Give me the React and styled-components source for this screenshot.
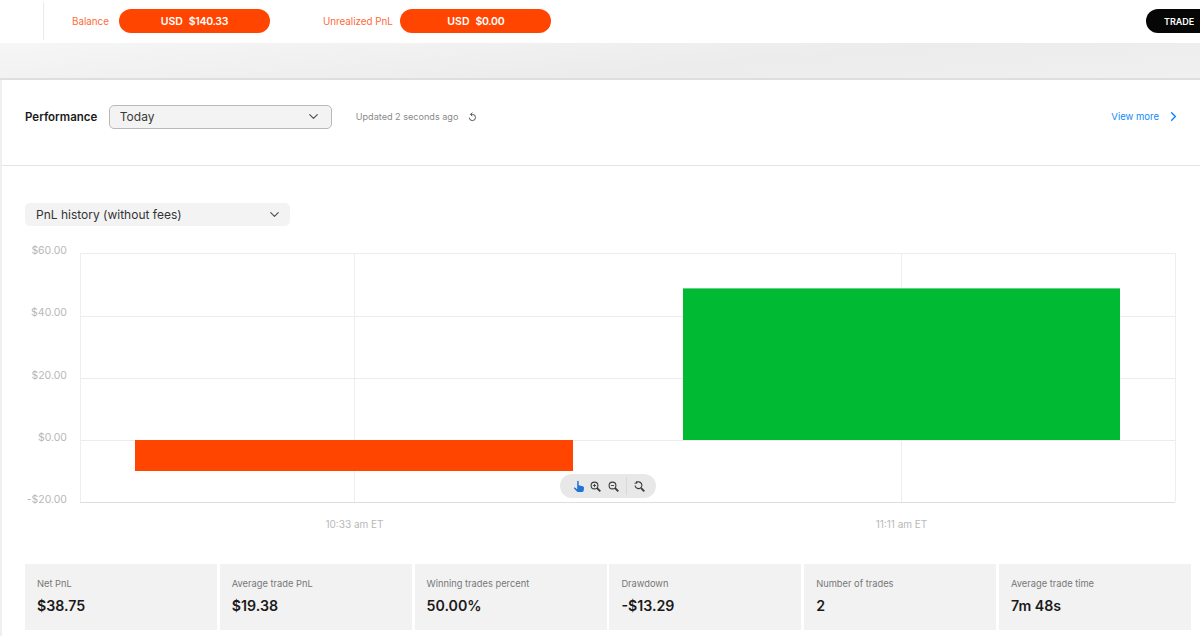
import React from 'react';
import styled, { createGlobalStyle } from 'styled-components';
import { ChevronDown, ChevronRight } from 'lucide-react';

const GlobalStyle = createGlobalStyle`
   html, body {
     margin: 0;
     padding: 0;
     background: #fff;
     overflow: hidden;
   }
   body {
     font-family: Inter, "Liberation Sans", sans-serif;
   }
`;

const Page = styled.div`
   width: 1200px;
   height: 636px;
   overflow: hidden;
   display: flex;
   flex-direction: column;
`;

const TopBar = styled.header`
   height: 43px;
   flex: none;
   display: flex;
   align-items: center;
   padding: 0 0 1px 43px;
   box-sizing: border-box;
`;

const Divider = styled.div`
   width: 1px;
   height: 38px;
   background: #eaeaea;
   margin-right: 28px;
`;

const BalanceGroup = styled.div`
   display: flex;
   align-items: center;
   gap: ${({ $gap }) => $gap}px;
   margin-right: ${({ $after }) => $after || 0}px;
`;

const BalanceLabel = styled.span`
   font-size: 9.8px;
   color: #ff6a38;
`;

const Pill = styled.div`
   width: 151px;
   height: 24px;
   border-radius: 12px;
   background: #ff4500;
   color: #fff;
   font-size: 10.5px;
   font-weight: 600;
   display: flex;
   align-items: center;
   justify-content: center;
   gap: 6px;
`;

const Amount = styled.span`
   letter-spacing: -0.3px;
`;

const TradeButton = styled.button`
   margin-left: auto;
   width: 54px;
   height: 24px;
   border: 0;
   border-radius: 12px 0 0 12px;
   background: #060606;
   color: #fff;
   font-family: inherit;
   font-size: 9px;
   font-weight: 600;
   text-align: left;
   padding: 0 0 0 18px;
`;

const Band = styled.div`
   height: 37px;
   box-sizing: border-box;
   flex: none;
   background: linear-gradient(175deg, #f6f6f6, #ececec 60%, #f0f0f0);
   border-bottom: 2px solid #dedede;
`;

const Content = styled.main`
   flex: 1;
   border-left: 2px solid #efefef;
   min-height: 0;
`;

const PerformanceRow = styled.section`
   height: 86px;
   box-sizing: border-box;
   border-bottom: 1px solid #e4e4e4;
   display: flex;
   align-items: center;
   padding: 1px 19px 13px 23px;
`;

const Title = styled.h2`
   margin: 0 12px 0 0;
   font-size: 11.5px;
   font-weight: 600;
   color: #1a1a1a;
`;

const RangeSelect = styled.div`
   width: 223px;
   height: 24px;
   box-sizing: border-box;
   border: 1px solid #b9b9b9;
   border-radius: 5px;
   background: #f3f3f3;
   display: flex;
   align-items: center;
   justify-content: space-between;
   padding: 0 10px 0 9.5px;
   font-size: 12px;
   color: #3a3a3a;
`;

const Updated = styled.span`
   margin-left: 23.5px;
   font-size: 9.1px;
   color: #8a8a8a;
   display: flex;
   align-items: center;
   gap: 10px;
`;

const ViewMore = styled.a`
   margin-left: auto;
   display: flex;
   align-items: center;
   gap: 7px;
   color: #1188ff;
   font-size: 9.5px;
`;

const MetricSelect = styled.div`
   width: 265px;
   height: 23px;
   margin: 37px 0 0 23px;
   box-sizing: border-box;
   border-radius: 5px;
   background: #f3f3f3;
   display: flex;
   align-items: center;
   justify-content: space-between;
   padding: 0 8px 1px 11px;
   font-size: 12px;
   color: #333;
`;

const ChartWrap = styled.div`
   position: relative;
   height: 338px;
`;

const ChartSvg = styled.svg`
   display: block;
`;

const AxisLabel = styled.text`
   font-family: Inter, "Liberation Sans", sans-serif;
   font-size: ${({ $size }) => $size}px;
   fill: #b8b8b8;
`;

const ZoomBar = styled.div`
   position: absolute;
   left: 558px;
   top: 248px;
   width: 96px;
   height: 24px;
   border-radius: 12px;
   background: #e8e8e8;
   display: flex;
   align-items: center;
   padding-left: 13px;
   box-sizing: border-box;
`;

const ZoomButton = styled.span`
   width: ${({ $w }) => $w}px;
   display: flex;
   align-items: center;
`;

const ZoomSep = styled.span`
   width: 1px;
   height: 18px;
   background: #d8d8d8;
   margin-right: 6.5px;
`;

const Stats = styled.section`
   display: grid;
   grid-template-columns: repeat(6, 192px);
   gap: 2.8px;
   padding-left: 23px;
`;

const StatCard = styled.div`
   height: 66px;
   background: #f2f2f2;
   padding: 13px 12px 0;
   box-sizing: border-box;
`;

const StatLabel = styled.div`
   font-size: 9.3px;
   color: #777;
   line-height: 13px;
`;

const StatValue = styled.div`
   margin-top: 7px;
   font-size: 14.2px;
   font-weight: 600;
   color: #1a1a1a;
   line-height: 18px;
`;

const stats = [
   { label: 'Net PnL', value: '$38.75' },
   { label: 'Average trade PnL', value: '$19.38' },
   { label: 'Winning trades percent', value: '50.00%' },
   { label: 'Drawdown', value: '-$13.29' },
   { label: 'Number of trades', value: '2' },
   { label: 'Average trade time', value: '7m 48s' },
];

const yTicks = [
   { label: '$60.00', y: 253, textY: 254 },
   { label: '$40.00', y: 316, textY: 316 },
   { label: '$20.00', y: 378, textY: 379 },
   { label: '$0.00', y: 440, textY: 441 },
   { label: '-$20.00', y: 502, textY: 503 },
];

// chart svg sits at x=2, y=226 on the page, keep page coords inside
const PnlChart = () => (
   <ChartSvg width="1198" height="338" viewBox="2 226 1198 338">
      {yTicks.map(({ label, y, textY }) => (
         <g key={label}>
            <line x1="80" x2="1175" y1={y + 0.5} y2={y + 0.5} stroke="#ececec" />
            <AxisLabel $size={10.5} x="67" y={textY} textAnchor="end">{label}</AxisLabel>
         </g>
      ))}
      {[80, 354, 901, 1175].map(x => (
         <line key={x} x1={x + 0.5} x2={x + 0.5} y1="253" y2="502" stroke="#eeeeee" />
      ))}
      <line x1="80" x2="1175" y1="502.5" y2="502.5" stroke="#dedede" />
      <rect x="135" y="440" width="438" height="31" fill="#ff4500" />
      <rect x="683" y="288.4" width="437" height="151.6" fill="#01ba34" />
      <AxisLabel $size={10} x="354.5" y="528" textAnchor="middle">10:33 am ET</AxisLabel>
      <AxisLabel $size={10} x="901.5" y="528" textAnchor="middle">11:11 am ET</AxisLabel>
   </ChartSvg>
);

const HandIcon = () => (
   <svg width="12" height="13" viewBox="0 0 12 13">
      <path d="M4.2 1.2c0-.7 1.5-.7 1.5 0v4l4 1c1 .3 1.4 1 1.3 2l-.4 2.6c-.1.7-.6 1.2-1.3 1.2H5.2c-.5 0-.9-.2-1.2-.6L1 8.6c-.4-.7.5-1.3 1.1-.8l2.1 1.4z" fill="#1f74d6" />
   </svg>
);

// kind: in / out / reset
const GlassIcon = ({ kind }) => (
   <svg width="11" height="11" viewBox="0 0 11 11" fill="none" stroke="#3c3c3c">
      {kind === 'reset' ? (
         <>
            <path d="M2 1.9A3.4 3.4 0 1 1 1.1 4.5" strokeWidth="1.1" />
            <path d="M.6 2.2h2.2V0" strokeWidth="1" />
         </>
      ) : (
         <circle cx="4.5" cy="4.5" r="3.4" strokeWidth="1.1" />
      )}
      <path d="M7 7l3.3 3.3" strokeWidth="1.8" />
      {kind !== 'reset' && <path d="M2.9 4.5h3.2" strokeWidth="0.9" />}
      {kind === 'in' && <path d="M4.5 2.9v3.2" strokeWidth="0.9" />}
   </svg>
);

const RefreshIcon = () => (
   <svg width="9" height="10" viewBox="0 0 9 10" fill="none" stroke="#555" strokeWidth="1">
      <path d="M2.6 2.4h2A3.1 3.1 0 1 1 1.3 5.6" />
      <path d="M4.3.6 2.5 2.4l1.8 1.8" />
   </svg>
);

const App = () => (
   <Page>
      <GlobalStyle />
      <TopBar>
         <Divider />
         <BalanceGroup $gap={10} $after={53}>
            <BalanceLabel>Balance</BalanceLabel>
            <Pill><span>USD</span><Amount>$140.33</Amount></Pill>
         </BalanceGroup>
         <BalanceGroup $gap={7.5}>
            <BalanceLabel>Unrealized PnL</BalanceLabel>
            <Pill><span>USD</span><Amount>$0.00</Amount></Pill>
         </BalanceGroup>
         <TradeButton>TRADE</TradeButton>
      </TopBar>
      <Band />
      <Content>
         <PerformanceRow>
            <Title>Performance</Title>
            <RangeSelect>
               Today
               <ChevronDown size={15} color="#555" />
            </RangeSelect>
            <Updated>
               Updated 2 seconds ago
               <RefreshIcon />
            </Updated>
            <ViewMore>
               View more
               <ChevronRight size={15} strokeWidth={2.4} />
            </ViewMore>
         </PerformanceRow>
         <MetricSelect>
            PnL history (without fees)
            <ChevronDown size={15} color="#555" />
         </MetricSelect>
         <ChartWrap>
            <PnlChart />
            <ZoomBar>
               <ZoomButton $w={17}><HandIcon /></ZoomButton>
               <ZoomButton $w={18}><GlassIcon kind="in" /></ZoomButton>
               <ZoomButton $w={18}><GlassIcon kind="out" /></ZoomButton>
               <ZoomSep />
               <ZoomButton $w={18}><GlassIcon kind="reset" /></ZoomButton>
            </ZoomBar>
         </ChartWrap>
         <Stats>
            {stats.map(s => (
               <StatCard key={s.label}>
                  <StatLabel>{s.label}</StatLabel>
                  <StatValue>{s.value}</StatValue>
               </StatCard>
            ))}
         </Stats>
      </Content>
   </Page>
);

export default App;
